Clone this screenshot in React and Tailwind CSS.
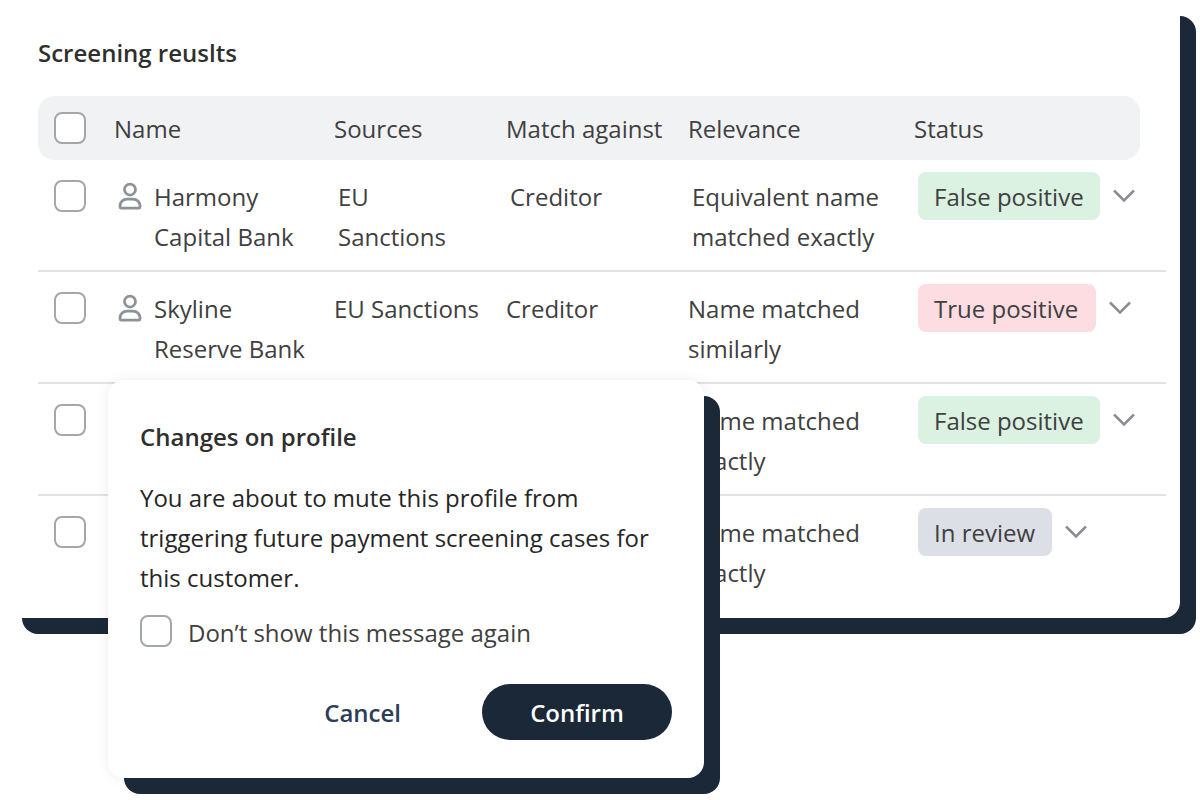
import React from 'react';

const rows = [
  {
    name: ['Harmony', 'Capital Bank'],
    sources: ['EU', 'Sanctions'],
    match: 'Creditor',
    relevance: ['Equivalent name', 'matched exactly'],
    status: 'False positive',
    nudge: true,
  },
  {
    name: ['Skyline', 'Reserve Bank'],
    sources: ['EU Sanctions'],
    match: 'Creditor',
    relevance: ['Name matched', 'similarly'],
    status: 'True positive',
  },
  { relevance: ['Name matched', 'exactly'], status: 'False positive' },
  { relevance: ['Name matched', 'exactly'], status: 'In review' },
];

const statusStyles = {
  'False positive': 'w-[182px] bg-[#dbf1e1]',
  'True positive': 'w-[178px] bg-[#fddde2]',
  'In review': 'w-[134px] bg-[#dcdfe6]',
};

const Checkbox = ({ className = '' }) => (
  <div className={`w-8 h-8 shrink-0 rounded-lg border-2 border-[#a3a7ad] bg-white ${className}`} />
);

const PersonIcon = () => (
  <svg width="24" height="28" viewBox="0 0 24 28" fill="none" stroke="#8d9299" strokeWidth="2.75" className="mt-[5px] shrink-0">
    <circle cx="12" cy="7.5" r="5.5" />
    <path d="M2 25v-1a7 7 0 0 1 7-7h6a7 7 0 0 1 7 7v1a1 1 0 0 1-1 1H3a1 1 0 0 1-1-1z" />
  </svg>
);

const Chevron = () => (
  <svg width="24" height="14" viewBox="0 0 24 14" fill="none" stroke="#8a8d93" strokeWidth="2.5" className="shrink-0">
    <path d="M2 1.5l10 10 10-10" />
  </svg>
);

const Lines = ({ lines = [] }) => (
  <div>
    {lines.map((line) => (
      <div key={line} className="whitespace-nowrap">{line}</div>
    ))}
  </div>
);

const gridCols = 'grid grid-cols-[60px_220px_172px_182px_226px_1fr]';

const App = () => {
  return (
    <div
      className="relative w-[1200px] h-[800px] overflow-hidden bg-white text-[24px] leading-[40px] text-[#404040]"
      style={{ fontFamily: '"Open Sans", sans-serif' }}
    >
      <div className="ml-[6px] w-[1174px] h-[618px] rounded-2xl bg-white pl-8 pt-[33px] shadow-[16px_16px_0_#1b2838]">
        <h2 className="font-semibold text-[#2f2f2f]">Screening reuslts</h2>

        <div className={`${gridCols} mt-[23px] w-[1102px] h-16 items-center rounded-2xl bg-[#f1f2f4] pl-4`}>
          <Checkbox />
          <div className="pt-[2px]">Name</div>
          <div className="pt-[2px]">Sources</div>
          <div className="pt-[2px]">Match against</div>
          <div className="pt-[2px]">Relevance</div>
          <div className="pt-[2px]">Status</div>
        </div>

        <div className="w-[1128px]">
          {rows.map((row, i) => (
            <div key={i} className={`${gridCols} h-28 items-start border-b-2 border-[#dfe2e6] pl-4 pt-3 last:border-b-0`}>
              <Checkbox className="mt-2" />
              <div className="flex gap-3 pl-1 pt-[5px]">
                {row.name && <PersonIcon />}
                <Lines lines={row.name} />
              </div>
              <div className={`pt-[5px] ${row.nudge ? 'pl-1' : ''}`}><Lines lines={row.sources} /></div>
              <div className={`pt-[5px] ${row.nudge ? 'pl-1' : ''}`}>{row.match}</div>
              <div className={`pt-[5px] ${row.nudge ? 'pl-1' : ''}`}><Lines lines={row.relevance} /></div>
              <div className="flex items-center gap-3 pl-1">
                <span className={`h-12 rounded-lg pl-4 leading-[50px] whitespace-nowrap ${statusStyles[row.status]}`}>{row.status}</span>
                <Chevron />
              </div>
            </div>
          ))}
        </div>
      </div>

      <div className="absolute left-[108px] top-[380px] flex h-[398px] w-[596px] flex-col rounded-2xl bg-white px-8 pt-[37px] shadow-[16px_16px_0_#1b2838,0_0_14px_rgba(0,0,0,0.07)]">
        <h3 className="font-semibold text-[#2f2f2f]">Changes on profile</h3>
        <p className="mt-[21px] text-[#262626]">
          You are about to mute this profile from
          <br />
          triggering future payment screening cases for
          <br />
          this customer.
        </p>
        <label className="mt-[15px] flex items-center gap-4">
          <Checkbox className="-mt-1" />
          <span>Don’t show this message again</span>
        </label>
        <div className="mt-[31px] flex items-center justify-end gap-[81px]">
          <button className="pt-[2px] font-semibold text-[#2c3e55]">Cancel</button>
          <button className="h-14 w-[190px] rounded-full bg-[#1b2838] pt-[2px] font-semibold text-white">Confirm</button>
        </div>
      </div>
    </div>
  );
};

export default App;
